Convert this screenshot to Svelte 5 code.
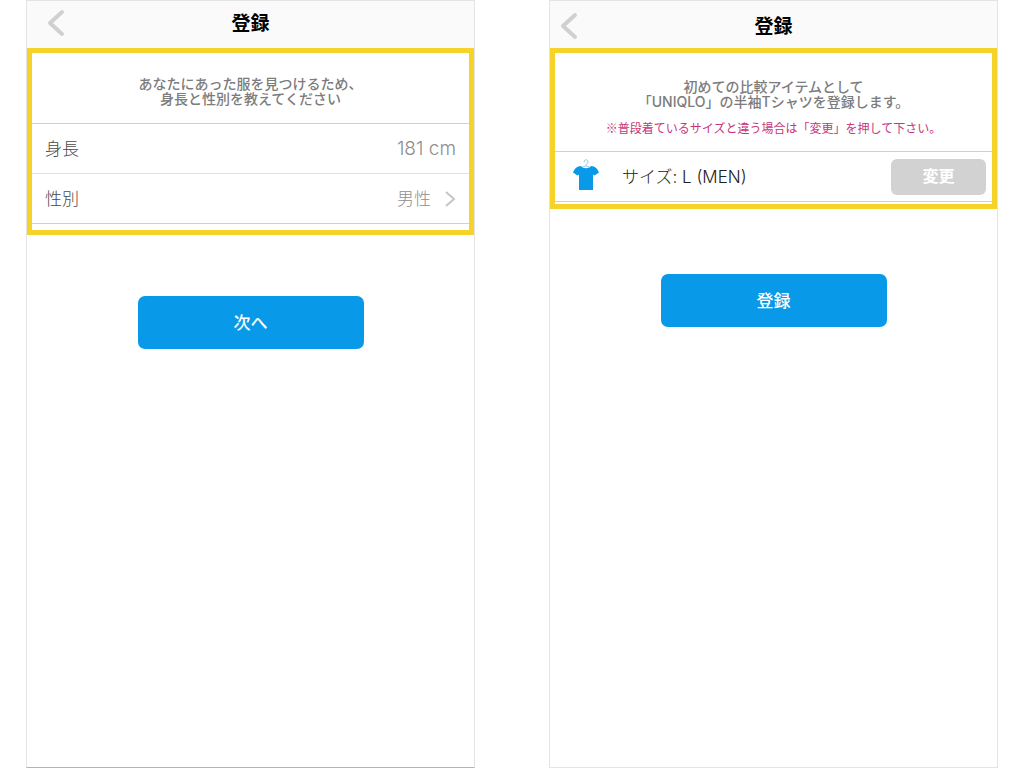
<script>
  let height = $state('181 cm');
</script>

{#snippet back()}
  <button class="back" type="button" aria-label="戻る">
    <svg width="20" height="30" viewBox="0 0 20 30" aria-hidden="true">
      <path d="M16 4 L4 15 L16 26" />
    </svg>
  </button>
{/snippet}

<main>
  <section class="screen first">
    <header>
      {@render back()}
      <h1>登録</h1>
    </header>
    <div class="panel profile">
      <p class="intro">あなたにあった服を見つけるため、<br />身長と性別を教えてください</p>
      <div class="row">
        <label for="height">身長</label>
        <input id="height" type="text" bind:value={height} />
      </div>
      <button class="row choice" type="button">
        <span>性別</span>
        <span class="value">男性
          <svg width="12" height="18" viewBox="0 0 12 18" aria-hidden="true">
            <path d="M2 2 L10 9 L2 16" />
          </svg>
        </span>
      </button>
    </div>
    <button class="primary" type="button">次へ</button>
  </section>

  <section class="screen second">
    <header>
      {@render back()}
      <h1>登録</h1>
    </header>
    <div class="panel item">
      <p class="intro">初めての比較アイテムとして<br />「UNIQLO」の半袖Tシャツを登録します。</p>
      <p class="note">※普段着ているサイズと違う場合は「変更」を押して下さい。</p>
      <div class="row">
        <svg class="shirt" width="28" height="32" viewBox="0 0 28 32" aria-hidden="true">
          <path class="hook" d="M12 3.500 C11.800 -0.300 16.500 0 16 3 C15.700 4.700 14 4.600 14 6.800 L9.500 8.500 M14 6.800 L18.500 8.500" />
          <path class="cloth" d="M9 7 C10.500 10 17.500 10 19 7 C23 7.400 25 8.800 27 13.500 L22.500 16.500 L21 15.500 V31 H7 V15.500 L5.500 16.500 L1 13.500 C3 8.800 5 7.400 9 7 Z" />
        </svg>
        <span class="size">サイズ: L (MEN)</span>
        <button class="change" type="button">変更</button>
      </div>
    </div>
    <button class="primary" type="button">登録</button>
  </section>
</main>

<style>
  :global(body) {
    background: #fff;
  }
  * {
    box-sizing: border-box;
  }
  main {
    display: grid;
    grid-template-columns: 1fr 1fr;
    gap: 74px;
    min-height: 100vh;
    padding: 0 26px;
    font-family: "Noto Sans CJK JP", sans-serif;
    color: #4a4a4a;
  }
  button,
  input {
    margin: 0;
    padding: 0;
    border: 0;
    background: none;
    color: inherit;
    font: inherit;
  }
  button {
    cursor: pointer;
  }
  .screen {
    display: flex;
    flex-direction: column;
    border: 1px solid #e4e4e4;
  }
  .first {
    border-bottom-color: #b4b4b4;
  }
  header {
    display: grid;
    grid-template-columns: 60px 1fr 60px;
    align-items: center;
    height: 47px;
    padding-bottom: 4px;
    background: #fafafa;
  }
  .second header {
    padding: 2px 0 0;
  }
  h1 {
    margin: 0;
    padding-bottom: 2px;
    text-align: center;
    font-size: 19px;
    line-height: 28px;
    font-weight: 700;
    color: #000;
  }
  .back {
    display: flex;
    padding-left: 19px;
  }
  .second .back {
    padding-left: 9px;
  }
  .back svg {
    fill: none;
    stroke: #d0d0d0;
    stroke-width: 4;
    stroke-linecap: round;
    stroke-linejoin: round;
  }
  .panel {
    border: 5px solid #f6d328;
  }
  .profile {
    padding: 23px 0 6px;
  }
  .item {
    padding: 26px 0 2px;
  }
  p {
    margin: 0;
    text-align: center;
  }
  .intro {
    font-family: Inter, "Noto Sans CJK JP", sans-serif;
    font-size: 14px;
    line-height: 15px;
    font-weight: 500;
    color: #7c7c7c;
  }
  .note {
    margin: 11px 0 15px;
    font-size: 12px;
    line-height: 16px;
    color: #c9357c;
  }
  .row {
    display: flex;
    align-items: center;
    width: 100%;
    height: 50px;
    padding: 0 13px;
    border-top: 1px solid #d0d0d2;
    font-family: Inter, "Noto Sans CJK JP", sans-serif;
    font-size: 17px;
    line-height: 24px;
    font-weight: 300;
  }
  .profile .row {
    justify-content: space-between;
  }
  .profile .intro {
    margin-bottom: 17px;
  }
  .profile .choice {
    height: 51px;
    border-top-color: #e0e0e0;
    border-bottom: 1px solid #d0d0d2;
  }
  .item .row {
    height: 51px;
    padding: 0 6px 0 17px;
    border-bottom: 1px solid #d0d0d2;
  }
  input {
    width: 120px;
    text-align: right;
    font-size: 19px;
    color: #8e8e8e;
  }
  .value {
    display: flex;
    align-items: center;
    gap: 13px;
    color: #8e8e8e;
  }
  .value svg {
    fill: none;
    stroke: #c4c4ca;
    stroke-width: 2;
  }
  .shirt {
    margin-bottom: 4px;
  }
  .hook {
    fill: none;
    stroke: #8fd0ee;
    stroke-width: 1;
  }
  .cloth {
    fill: #089ae8;
  }
  .size {
    flex: 1;
    padding-left: 22px;
    color: #222;
  }
  .change {
    width: 95px;
    height: 36px;
    padding-bottom: 1px;
    border-radius: 6px;
    background: #d2d2d2;
    color: #fff;
    font-size: 16px;
    font-weight: 700;
  }
  .primary {
    align-self: center;
    width: 226px;
    height: 53px;
    margin-top: 61px;
    padding-bottom: 2px;
    border-radius: 7px;
    background: #089ae8;
    color: #fff;
    font-size: 17px;
    font-weight: 500;
  }
  .second .primary {
    margin-top: 65px;
  }
</style>
